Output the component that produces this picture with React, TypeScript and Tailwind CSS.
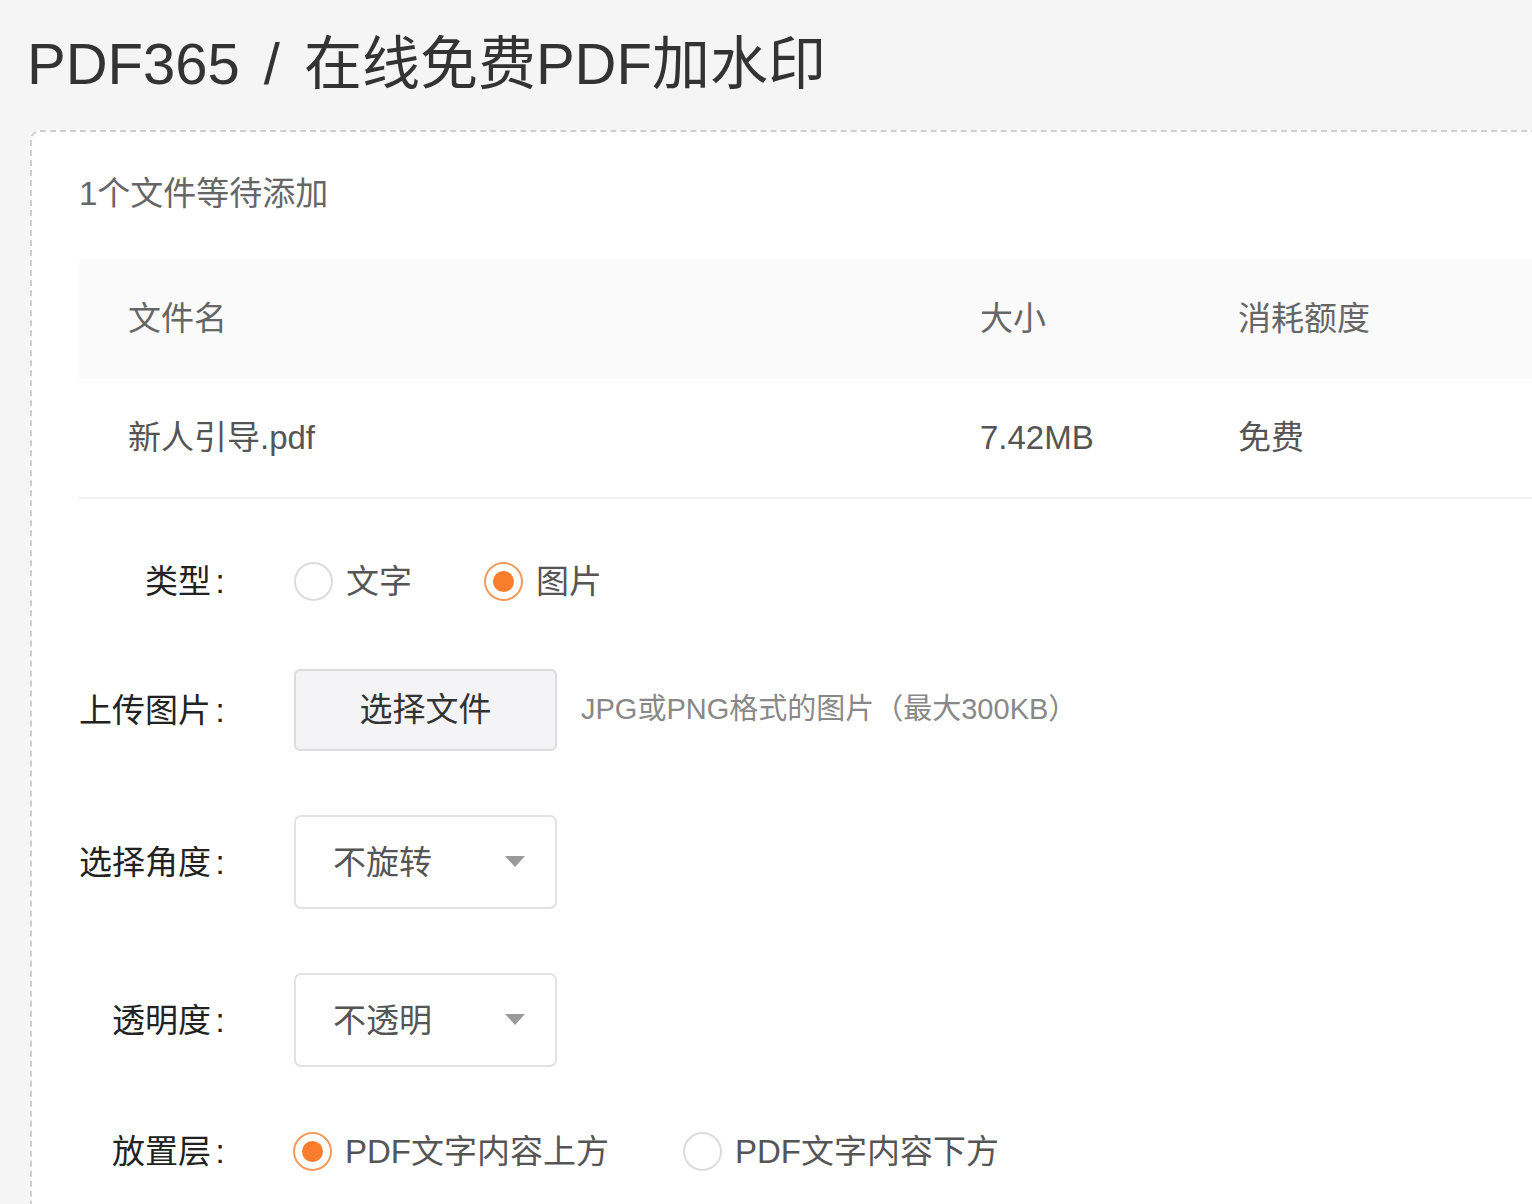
const font = "font-['Liberation_Sans','Noto_Sans_CJK_SC',sans-serif]";

function Radio({ checked, label }: { checked?: boolean; label: string }) {
  return (
    <label className="flex items-center">
      {checked ? (
        <span className="flex h-[39px] w-[39px] items-center justify-center rounded-full border-[2px] border-[#f39a5c]">
          <span className="h-[21px] w-[21px] rounded-full bg-[#fa7d2d]" />
        </span>
      ) : (
        <span className="h-[39px] w-[39px] rounded-full border-[2px] border-[#dcdcdc] bg-white" />
      )}
      <span className="ml-[13px] text-[33px] leading-none text-[#555]">{label}</span>
    </label>
  );
}

function Label({ text }: { text: string }) {
  return (
    <div className="w-[150px] shrink-0 text-right text-[33px] leading-none text-[#222]">
      {text}
      <span className="inline-block w-[18px] text-center">:</span>
    </div>
  );
}

function Select({ value }: { value: string }) {
  return (
    <div className="flex h-[94px] w-[263px] items-center justify-between rounded-[7px] border-[2px] border-[#e2e2e2] bg-white pl-[37px] pr-[30px]">
      <span className="text-[33px] leading-none text-[#555]">{value}</span>
      <svg width="20" height="12" viewBox="0 0 20 12">
        <path d="M0 0 L20 0 L10 11 Z" fill="#9a9a9a" />
      </svg>
    </div>
  );
}

export default function App() {
  return (
    <main className={`min-h-[1204px] overflow-hidden bg-[#f5f5f5] ${font}`}>
      <h1 className="pl-[27px] pt-[28px] text-[58px] leading-[72px] text-[#333]">
        PDF365<span className="mx-[24px]">/</span>在线免费PDF加水印
      </h1>

      <section className="ml-[30px] mt-[30px] w-[1580px] rounded-tl-[10px] border-[2px] border-dashed border-[#cfcfcf] bg-white pb-[60px] pl-[47px] pt-[40px]">
        <p className="text-[33px] leading-[44px] text-[#666]">1个文件等待添加</p>

        <div className="mt-[43px]">
          <div className="flex h-[120px] items-center bg-[#fafafa] text-[33px] text-[#666]">
            <div className="w-[853px] pl-[49px]">文件名</div>
            <div className="w-[258px] pl-[48px]">大小</div>
            <div className="pl-[48px]">消耗额度</div>
          </div>
          <div className="flex h-[120px] items-center border-b-[2px] border-[#eeeeee] text-[33px] text-[#555]">
            <div className="w-[853px] pl-[49px]">新人引导.pdf</div>
            <div className="w-[258px] pl-[48px]">7.42MB</div>
            <div className="pl-[48px]">免费</div>
          </div>
        </div>

        <div className="pt-[62px]">
          <div className="flex h-[40px] items-center">
            <Label text="类型" />
            <div className="ml-[65px] flex items-center gap-[72px]">
              <Radio label="文字" />
              <Radio checked label="图片" />
            </div>
          </div>

          <div className="mt-[68px] flex items-center">
            <Label text="上传图片" />
            <button className="ml-[65px] h-[82px] w-[263px] rounded-[6px] border-[2px] border-[#dcdcdc] bg-[#f4f4f6] text-[33px] text-[#333]">
              选择文件
            </button>
            <span className="ml-[24px] text-[29px] text-[#888]">JPG或PNG格式的图片（最大300KB）</span>
          </div>

          <div className="mt-[64px] flex items-center">
            <Label text="选择角度" />
            <div className="ml-[65px]">
              <Select value="不旋转" />
            </div>
          </div>

          <div className="mt-[64px] flex items-center">
            <Label text="透明度" />
            <div className="ml-[65px]">
              <Select value="不透明" />
            </div>
          </div>

          <div className="mt-[64px] flex h-[40px] items-center">
            <Label text="放置层" />
            <div className="ml-[64px] flex items-center gap-[74px]">
              <Radio checked label="PDF文字内容上方" />
              <Radio label="PDF文字内容下方" />
            </div>
          </div>
        </div>
      </section>
    </main>
  );
}
